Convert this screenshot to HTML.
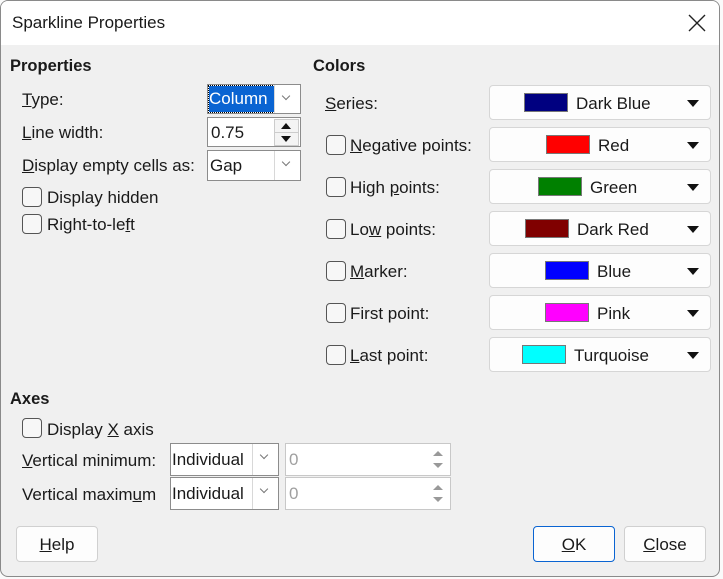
<!DOCTYPE html>
<html><head><style>
body{margin:0;width:723px;height:579px;background:#fafafa;font-family:"Liberation Sans",sans-serif;font-size:17px;color:#1a1a1a;overflow:hidden;position:relative}
.win{position:absolute;left:0;top:0;width:720px;height:577px;border-radius:8px;background:#f0f0f0;overflow:hidden;box-shadow:inset 0 0 0 1px #8a8a8a}
.title{position:absolute;left:1px;top:1px;right:1px;height:44px;background:#fff;border-radius:7px 7px 0 0}
.a{position:absolute;white-space:nowrap}
.b{font-weight:bold;font-size:16.5px}
u{text-decoration:underline}
.cb{position:absolute;width:18px;height:18px;border:1px solid #555;border-radius:4px;background:#f7f7f7}
.box{position:absolute;background:#fff;border:1px solid #8c8c8c;box-sizing:border-box}
.dd{position:absolute;top:0;bottom:0;right:0;width:25px;border-left:1px solid #d8d8d8;background:#fff}
.dd:after{content:"";position:absolute;left:8px;top:8px;width:5px;height:5px;border-right:1px solid #777;border-bottom:1px solid #777;transform:rotate(45deg)}
.cbtn{position:absolute;left:489px;width:222px;height:35px;background:#fdfdfd;border:1px solid #d6d6d6;border-radius:4px;box-sizing:border-box}
.sw{position:absolute;top:7px;width:44px;height:19px;border:1px solid #777;box-sizing:border-box}
.tri{position:absolute;right:11px;top:14px;border-left:6px solid transparent;border-right:6px solid transparent;border-top:7px solid #111}
.btn{position:absolute;top:526px;height:36px;width:82px;background:#fdfdfd;border:1px solid #d0d0d0;border-radius:4px;box-sizing:border-box;text-align:center;line-height:36px}
</style></head><body>
<div class="win">
<div class="title"></div>
<div class="a" style="left:12px;top:13px;font-size:17px">Sparkline Properties</div>
<svg class="a" style="left:688px;top:14px" width="18" height="18"><path d="M1 1L17 17M17 1L1 17" stroke="#222" stroke-width="1.4"/></svg>

<div class="a b" style="left:10px;top:57px">Properties</div>
<div class="a" style="left:22px;top:90px"><u>T</u>ype:</div>
<div class="box" style="left:207px;top:84px;width:94px;height:30px"><div class="a" style="left:1px;top:1px;width:65px;height:26px;background:#0a64d2;color:#fff;line-height:26px;outline:1px dotted #000">Column</div><div class="dd"></div></div>
<div class="a" style="left:22px;top:123px"><u>L</u>ine width:</div>
<div class="box" style="left:207px;top:117px;width:94px;height:30px"><div class="a" style="left:3px;top:5px">0.75</div>
<div class="a" style="right:1px;top:1px;width:23px;height:12px;border:1px solid #ccc;background:#f4f4f4"><div class="a" style="left:6px;top:3px;border-left:5px solid transparent;border-right:5px solid transparent;border-bottom:6px solid #111"></div></div>
<div class="a" style="right:1px;top:14px;width:23px;height:12px;border:1px solid #ccc;background:#f4f4f4"><div class="a" style="left:6px;top:3px;border-left:5px solid transparent;border-right:5px solid transparent;border-top:6px solid #111"></div></div></div>
<div class="a" style="left:22px;top:156px"><u>D</u>isplay empty cells as:</div>
<div class="box" style="left:207px;top:150px;width:94px;height:31px"><div class="a" style="left:2px;top:5px">Gap</div><div class="dd"></div></div>
<div class="cb" style="left:22px;top:187px"></div><div class="a" style="left:47px;top:188px">Display hidden</div>
<div class="cb" style="left:22px;top:214px"></div><div class="a" style="left:47px;top:215px">Right-to-le<u>f</u>t</div>

<div class="a b" style="left:313px;top:57px">Colors</div>
<div class="a" style="left:325px;top:94px"><u>S</u>eries:</div>
<div class="cbtn" style="top:85px"><div class="sw" style="left:34px;background:#000080"></div><div class="a" style="left:86px;top:8px">Dark Blue</div><div class="tri"></div></div>
<div class="cb" style="left:326px;top:135px"></div><div class="a" style="left:350px;top:136px"><u>N</u>egative points:</div>
<div class="cbtn" style="top:127px"><div class="sw" style="left:56px;background:#ff0000"></div><div class="a" style="left:108px;top:8px">Red</div><div class="tri"></div></div>
<div class="cb" style="left:326px;top:177px"></div><div class="a" style="left:350px;top:178px">High <u>p</u>oints:</div>
<div class="cbtn" style="top:169px"><div class="sw" style="left:48px;background:#008000"></div><div class="a" style="left:100px;top:8px">Green</div><div class="tri"></div></div>
<div class="cb" style="left:326px;top:219px"></div><div class="a" style="left:350px;top:220px">Lo<u>w</u> points:</div>
<div class="cbtn" style="top:211px"><div class="sw" style="left:35px;background:#800000"></div><div class="a" style="left:87px;top:8px">Dark Red</div><div class="tri"></div></div>
<div class="cb" style="left:326px;top:261px"></div><div class="a" style="left:350px;top:262px"><u>M</u>arker:</div>
<div class="cbtn" style="top:253px"><div class="sw" style="left:55px;background:#0000ff"></div><div class="a" style="left:107px;top:8px">Blue</div><div class="tri"></div></div>
<div class="cb" style="left:326px;top:303px"></div><div class="a" style="left:350px;top:304px">First point:</div>
<div class="cbtn" style="top:295px"><div class="sw" style="left:55px;background:#ff00ff"></div><div class="a" style="left:107px;top:8px">Pink</div><div class="tri"></div></div>
<div class="cb" style="left:326px;top:345px"></div><div class="a" style="left:350px;top:346px"><u>L</u>ast point:</div>
<div class="cbtn" style="top:337px"><div class="sw" style="left:32px;background:#00ffff"></div><div class="a" style="left:84px;top:8px">Turquoise</div><div class="tri"></div></div>

<div class="a b" style="left:10px;top:390px">Axes</div>
<div class="cb" style="left:22px;top:418px"></div><div class="a" style="left:47px;top:420px">Display <u>X</u> axis</div>
<div class="a" style="left:22px;top:451px"><u>V</u>ertical minimum:</div>
<div class="box" style="left:170px;top:443px;width:109px;height:33px"><div class="a" style="left:1px;top:6px">Individual</div><div class="dd"></div></div>
<div class="box" style="left:285px;top:443px;width:166px;height:33px;border-color:#c8c8c8"><div class="a" style="left:3px;top:6px;color:#a0a0a0">0</div><div class="a" style="right:7px;top:7px;border-left:5px solid transparent;border-right:5px solid transparent;border-bottom:5px solid #999"></div><div class="a" style="right:7px;top:19px;border-left:5px solid transparent;border-right:5px solid transparent;border-top:5px solid #999"></div></div>
<div class="a" style="left:22px;top:485px">Vertical maxim<u>u</u>m</div>
<div class="box" style="left:170px;top:477px;width:109px;height:33px"><div class="a" style="left:1px;top:6px">Individual</div><div class="dd"></div></div>
<div class="box" style="left:285px;top:477px;width:166px;height:33px;border-color:#c8c8c8"><div class="a" style="left:3px;top:6px;color:#a0a0a0">0</div><div class="a" style="right:7px;top:7px;border-left:5px solid transparent;border-right:5px solid transparent;border-bottom:5px solid #999"></div><div class="a" style="right:7px;top:19px;border-left:5px solid transparent;border-right:5px solid transparent;border-top:5px solid #999"></div></div>

<div class="btn" style="left:16px"><u>H</u>elp</div>
<div class="btn" style="left:533px;border-color:#0a64d2"><u>O</u>K</div>
<div class="btn" style="left:624px"><u>C</u>lose</div>
</div>
</body></html>
